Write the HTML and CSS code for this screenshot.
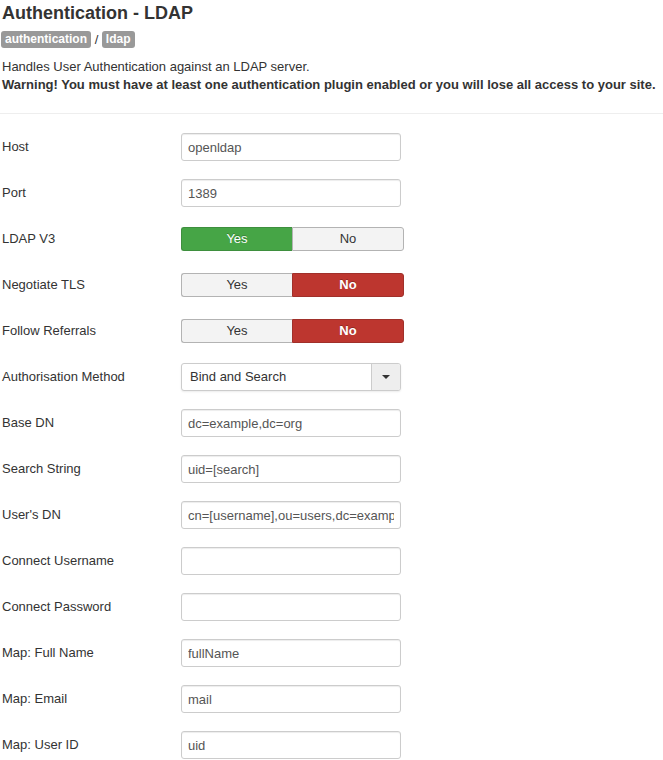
FILE: index.html
```html
<!DOCTYPE html>
<html>
<head>
<meta charset="utf-8">
<link rel="stylesheet" href="styles.css">
</head>
<body>
<div class="header">
  <h1 class="title">Authentication - LDAP</h1>
  <div class="tags"><span class="badge">authentication</span> / <span class="badge">ldap</span></div>
  <p class="desc">Handles User Authentication against an LDAP server.<br><strong>Warning! You must have at least one authentication plugin enabled or you will lose all access to your site.</strong></p>
</div>
<hr class="sep">
<form class="form">
  <div class="row"><label class="lbl">Host</label><input class="field" type="text" value="openldap"></div>
  <div class="row"><label class="lbl">Port</label><input class="field" type="text" value="1389"></div>
  <div class="row"><label class="lbl">LDAP V3</label>
    <div class="toggle"><span class="opt on-yes">Yes</span><span class="opt">No</span></div></div>
  <div class="row"><label class="lbl">Negotiate TLS</label>
    <div class="toggle"><span class="opt">Yes</span><span class="opt on-no">No</span></div></div>
  <div class="row"><label class="lbl">Follow Referrals</label>
    <div class="toggle"><span class="opt">Yes</span><span class="opt on-no">No</span></div></div>
  <div class="row"><label class="lbl">Authorisation Method</label>
    <div class="select"><span class="select-text">Bind and Search</span><span class="select-arrow"><span class="caret"></span></span></div></div>
  <div class="row"><label class="lbl">Base DN</label><input class="field" type="text" value="dc=example,dc=org"></div>
  <div class="row"><label class="lbl">Search String</label><input class="field" type="text" value="uid=[search]"></div>
  <div class="row"><label class="lbl">User's DN</label><input class="field" type="text" value="cn=[username],ou=users,dc=example,dc=org"></div>
  <div class="row"><label class="lbl">Connect Username</label><input class="field" type="text" value=""></div>
  <div class="row"><label class="lbl">Connect Password</label><input class="field" type="password" value=""></div>
  <div class="row"><label class="lbl">Map: Full Name</label><input class="field" type="text" value="fullName"></div>
  <div class="row"><label class="lbl">Map: Email</label><input class="field" type="text" value="mail"></div>
  <div class="row"><label class="lbl">Map: User ID</label><input class="field" type="text" value="uid"></div>
</form>
</body>
</html>
```
FILE: styles.css
```css
html, body {
  margin: 0;
  padding: 0;
  background: #fff;
}
body {
  font-family: "Liberation Sans", Arial, sans-serif;
  font-size: 13px;
  line-height: 18px;
  color: #333;
}
.header {
  padding: 2px 0 0 1px;
}
.title {
  margin: 0 0 0 1px;
  font-size: 18px;
  line-height: 22px;
  font-weight: bold;
  color: #333;
}
.tags {
  margin-top: 7px;
  height: 17px;
  line-height: 17px;
  color: #333;
}
.badge {
  display: inline-block;
  background: #999;
  color: #fff;
  font-weight: bold;
  font-size: 12px;
  line-height: 17px;
  height: 17px;
  padding: 0 4px;
  border-radius: 3px;
  vertical-align: top;
}
.desc {
  margin: 10px 0 0 1px;
  line-height: 18px;
}
.sep {
  margin: 19px 0 19px 0;
  border: 0;
  border-top: 1px solid #eee;
  height: 0;
}
.form {
  padding-left: 1px;
}
.row {
  display: flex;
  align-items: center;
  height: 28px;
  margin-bottom: 18px;
}
.lbl {
  width: 180px;
  flex: none;
  padding-left: 1px;
  box-sizing: border-box;
}
.field {
  box-sizing: border-box;
  width: 220px;
  height: 28px;
  margin: 0;
  padding: 4px 6px;
  border: 1px solid #ccc;
  border-radius: 3px;
  box-shadow: inset 0 1px 1px rgba(0,0,0,0.075);
  font-family: "Liberation Sans", Arial, sans-serif;
  font-size: 13px;
  color: #555;
  background: #fff;
  outline: none;
}
.toggle {
  display: flex;
  width: 223px;
  height: 24px;
  box-sizing: border-box;
}
.opt {
  flex: 1;
  display: flex;
  align-items: center;
  justify-content: center;
  background: #f3f3f3;
  border: 1px solid #b3b3b3;
  color: #333;
  font-size: 13px;
}
.opt:first-child {
  border-radius: 3px 0 0 3px;
  border-right: 0;
}
.opt:last-child {
  border-radius: 0 3px 3px 0;
}
.on-yes {
  background: #46a546;
  border-color: #3e8f3e;
  color: #fff;
  text-shadow: 0 -1px 0 rgba(0,0,0,0.25);
}
.on-no {
  background: #bd362f;
  border-color: #a0302a;
  color: #fff;
  font-weight: bold;
  text-shadow: 0 -1px 0 rgba(0,0,0,0.25);
}
.toggle .on-no {
  border-left: 1px solid #a0302a;
}
.select {
  display: flex;
  width: 220px;
  height: 28px;
  box-sizing: border-box;
  border: 1px solid #ccc;
  border-radius: 3px;
  background: #fff;
  box-shadow: 0 1px 2px rgba(0,0,0,0.08);
  overflow: hidden;
}
.select-text {
  flex: 1;
  padding-left: 8px;
  line-height: 26px;
  color: #333;
}
.select-arrow {
  width: 28px;
  flex: none;
  border-left: 1px solid #ccc;
  background: #eee;
  display: flex;
  align-items: center;
  justify-content: center;
}
.caret {
  width: 0;
  height: 0;
  border-left: 4px solid transparent;
  border-right: 4px solid transparent;
  border-top: 4px solid #333;
}
```
